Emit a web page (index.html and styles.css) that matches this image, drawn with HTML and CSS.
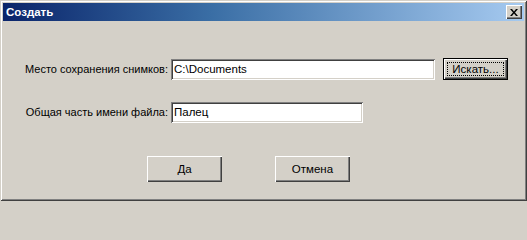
FILE: index.html
```html
<!DOCTYPE html>
<html lang="ru">
<head>
<meta charset="utf-8">
<title>Создать</title>
<link rel="stylesheet" href="styles.css">
</head>
<body>
<div class="window">
  <div class="titlebar">
    <span class="title">Создать</span>
    <button class="close" type="button" aria-label="Закрыть">
      <svg width="8" height="7" viewBox="0 0 8 7"><path d="M0 0h2l2 2.5L6 0h2L5 3.5 8 7H6L4 4.5 2 7H0l3-3.5z" fill="#000"/></svg>
    </button>
  </div>
  <div class="content">
    <div class="row row-path">
      <label class="label" for="path">Место сохранения снимков:</label>
      <div class="field field-long"><input id="path" type="text" value="C:\Documents"></div>
      <button class="btn btn-browse" type="button"><span class="focus">Искать...</span></button>
    </div>
    <div class="row row-name">
      <label class="label" for="name">Общая часть имени файла:</label>
      <div class="field field-short"><input id="name" type="text" value="Палец"></div>
    </div>
    <div class="actions">
      <button class="btn btn-action" type="button">Да</button>
      <button class="btn btn-action" type="button">Отмена</button>
    </div>
  </div>
</div>
</body>
</html>
```

FILE: styles.css
```css
* { box-sizing: border-box; }
html, body { margin: 0; padding: 0; }
body {
  width: 527px;
  height: 201px;
  background: #d4d0c8;
  font-family: "Liberation Sans", Arial, sans-serif;
  font-size: 11px;
  color: #000;
  overflow: hidden;
}
.window {
  width: 527px;
  height: 201px;
  background: #d4d0c8;
  padding: 3px;
  display: flex;
  flex-direction: column;
  box-shadow:
    inset 1px 1px 0 #d4d0c8,
    inset -1px -1px 0 #404040,
    inset 2px 2px 0 #ffffff,
    inset -2px -2px 0 #808080;
}
.titlebar {
  height: 18px;
  flex: none;
  display: flex;
  align-items: center;
  justify-content: space-between;
  padding: 0 2px 0 3px;
  background: linear-gradient(to right, #0a246a 0%, #3a6ea5 40%, #a6caf0 100%);
}
.title {
  color: #fff;
  font-weight: bold;
  font-size: 11.5px;
}
.close {
  width: 16px;
  height: 14px;
  padding: 0;
  margin: 0;
  border: 0;
  background: #d4d0c8;
  display: flex;
  align-items: center;
  justify-content: center;
  box-shadow:
    inset 1px 1px 0 #ffffff,
    inset -1px -1px 0 #404040,
    inset -2px -2px 0 #808080;
}
.content {
  flex: 1;
  display: flex;
  flex-direction: column;
  padding-top: 37px;
}
.row {
  display: flex;
  align-items: center;
  height: 22px;
}
.row-name { margin-top: 21px; }
.label {
  width: 168px;
  text-align: right;
  padding-right: 3px;
  white-space: nowrap;
}
.field {
  height: 21px;
  background: #fff;
  padding: 2px;
  box-shadow:
    inset 1px 1px 0 #808080,
    inset -1px -1px 0 #ffffff,
    inset 2px 2px 0 #404040,
    inset -2px -2px 0 #d4d0c8;
}
.field-long { width: 264px; }
.field-short { width: 192px; }
.field input {
  width: 100%;
  height: 100%;
  border: 0;
  outline: 0;
  background: transparent;
  padding: 0 1px;
  margin: 0;
  font: inherit;
  font-size: 11.5px;
  color: #000;
}
.btn {
  font: inherit;
  font-size: 11.5px;
  color: #000;
  background: #d4d0c8;
  border: 0;
  margin: 0;
  padding: 0;
  display: flex;
  align-items: center;
  justify-content: center;
  box-shadow:
    inset 1px 1px 0 #ffffff,
    inset -1px -1px 0 #404040,
    inset -2px -2px 0 #808080;
}
.btn-browse {
  width: 65px;
  height: 22px;
  margin-left: 8px;
  box-shadow:
    inset 0 0 0 1px #000,
    inset 2px 2px 0 #ffffff,
    inset -2px -2px 0 #404040,
    inset -3px -3px 0 #808080;
}
.focus {
  display: block;
  margin: 4px;
  width: calc(100% - 8px);
  height: calc(100% - 8px);
  border: 1px dotted #000;
  line-height: 12px;
}
.actions {
  display: flex;
  gap: 53px;
  padding-left: 144px;
  margin-top: 33px;
}
.btn-action {
  width: 75px;
  height: 26px;
}
```
